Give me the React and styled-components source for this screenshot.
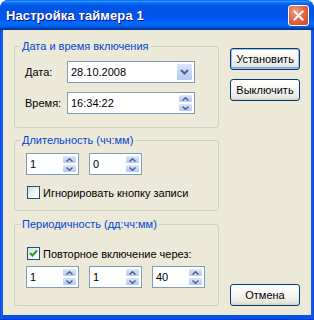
import React from 'react';
import styled, { createGlobalStyle } from 'styled-components';

const Global = createGlobalStyle`
  html, body { margin: 0; padding: 0; background: #ffffff; }
  body { width: 314px; height: 320px; overflow: hidden; }
  * { box-sizing: border-box; }
`;

const Window = styled.div`
  width: 314px;
  height: 320px;
  display: flex;
  flex-direction: column;
  background: linear-gradient(90deg, #0831d9 0, #166aee 1px, #0055e5 3px, #0055e5 calc(100% - 3px), #166aee calc(100% - 2px), #0831d9 100%);
  border-radius: 8px 8px 0 0;
  border-bottom: 1px solid #0831d9;
  font-family: "Liberation Sans", Arial, sans-serif;
  font-size: 11px;
  color: #000;
  overflow: hidden;
`;

const TitleBar = styled.div`
  height: 30px;
  flex: none;
  display: flex;
  align-items: center;
  justify-content: space-between;
  padding: 0 5px 0 6px;
  border-radius: 8px 8px 0 0;
  background: linear-gradient(180deg, #0058ee 0%, #3593ff 4%, #288eff 6%, #127dff 8%, #036ffc 10%, #0262ee 14%, #0057e5 20%, #0054e3 24%, #0055eb 56%, #005bf5 66%, #026afe 76%, #0062ef 86%, #0052d6 92%, #0040ab 94%, #003092 100%);
`;

const Title = styled.span`
  color: #fff;
  font-weight: bold;
  font-size: 13px;
  letter-spacing: 0.1px;
  text-shadow: 1px 1px #0f1089;
  margin-top: 1px;
`;

const CloseButton = styled.div`
  width: 21px;
  height: 21px;
  border: 1px solid #fff;
  border-radius: 3px;
  background: radial-gradient(circle at 35% 30%, #f19f86 0%, #e5694a 45%, #cc4421 100%);
  display: flex;
  align-items: center;
  justify-content: center;
`;

const Body = styled.div`
  flex: 1;
  margin: 0 3px 4px 3px;
  background: #ece9d8;
  display: flex;
  gap: 11px;
  padding: 10px 0 9px 11px;
`;

const LeftColumn = styled.div`
  width: 205px;
  display: flex;
  flex-direction: column;
  gap: 6px;
`;

const RightColumn = styled.div`
  display: flex;
  flex-direction: column;
  gap: 9px;
  padding-top: 8px;
`;

const Group = styled.fieldset`
  margin: ${p => p.$mt || 0}px 0 0 0;
  padding: 0;
  min-width: 0;
  height: ${p => p.$h}px;
  border: 1px solid #d0d0bf;
  border-radius: 3px;
`;

const Legend = styled.legend`
  margin-left: 5px;
  padding: 0 2px;
  color: #0046d5;
  line-height: 13px;
  font-size: 11px;
`;

const GroupContent = styled.div`
  padding: ${p => p.$pad};
  display: flex;
  flex-direction: column;
  gap: ${p => p.$gap || 0}px;
`;

const FieldGrid = styled.div`
  display: grid;
  grid-template-columns: 42px 128px;
  row-gap: 9px;
  align-items: center;
`;

const Label = styled.span`
  line-height: 13px;
`;

const Field = styled.div`
  width: ${p => p.$w}px;
  height: 22px;
  border: 1px solid #7f9db9;
  background: #fff;
  display: flex;
  align-items: stretch;
`;

const FieldText = styled.span`
  flex: 1;
  padding-left: 3px;
  display: flex;
  align-items: center;
`;

const SpinBox = styled.div`
  width: 15px;
  margin: 1px 1px 1px 0;
  display: flex;
  flex-direction: column;
`;

const SpinHalf = styled.div`
  flex: 1;
  border: 1px solid #ffffff;
  border-radius: 2px;
  background: linear-gradient(180deg, #dde6fb 0%, #c6d5f9 50%, #b6c8f3 100%);
  display: flex;
  align-items: center;
  justify-content: center;
`;

const DropButton = styled.div`
  width: 17px;
  margin: 1px 1px 1px 0;
  border: 1px solid #ffffff;
  border-radius: 2px;
  background: linear-gradient(180deg, #dde6fb 0%, #c6d5f9 50%, #b6c8f3 100%);
  display: flex;
  align-items: center;
  justify-content: center;
`;

const SpinRow = styled.div`
  display: flex;
  gap: 10px;
`;

const CheckRow = styled.label`
  display: flex;
  align-items: center;
  gap: 3px;
  margin-left: 1px;
  height: 13px;
`;

const CheckBox = styled.span`
  width: 13px;
  height: 13px;
  flex: none;
  border: 1px solid #1c5180;
  background: linear-gradient(135deg, #dcdcd7 0%, #f4f4f2 60%, #ffffff 100%);
  display: flex;
  align-items: center;
  justify-content: center;
`;

const Button = styled.div`
  width: 70px;
  height: 22px;
  border: 1px solid #003c74;
  border-radius: 3px;
  background: linear-gradient(180deg, #ffffff 0%, #f3f3ef 60%, #e6e4dc 88%, #d6d0c5 100%);
  box-shadow: ${p => (p.$default ? 'inset 0 0 0 1px #a6c0ec, inset 0 -1px 0 1px #7c9ee0' : 'none')};
  display: flex;
  align-items: center;
  justify-content: center;
`;

const BottomButton = styled(Button)`
  margin-top: auto;
`;

const UpArrow = () => (
  <svg width="7" height="4" viewBox="0 0 7 4">
    <path d="M0.5 3.5 L3.5 0.7 L6.5 3.5" fill="none" stroke="#4d6185" strokeWidth="1.4" />
  </svg>
);

const DownArrow = () => (
  <svg width="7" height="4" viewBox="0 0 7 4">
    <path d="M0.5 0.5 L3.5 3.3 L6.5 0.5" fill="none" stroke="#4d6185" strokeWidth="1.4" />
  </svg>
);

const DropArrow = () => (
  <svg width="9" height="6" viewBox="0 0 9 6">
    <path d="M1 1 L4.5 4.5 L8 1" fill="none" stroke="#4d6185" strokeWidth="2" />
  </svg>
);

const Spinner = ({ value, width = 53 }) => (
  <Field $w={width}>
    <FieldText>{value}</FieldText>
    <SpinBox>
      <SpinHalf><UpArrow /></SpinHalf>
      <SpinHalf><DownArrow /></SpinHalf>
    </SpinBox>
  </Field>
);

const Check = ({ checked, children }) => (
  <CheckRow>
    <CheckBox>
      {checked && (
        <svg width="9" height="9" viewBox="0 0 9 9">
          <path d="M1 4 L3.5 6.5 L8 1.5" fill="none" stroke="#21a121" strokeWidth="2" />
        </svg>
      )}
    </CheckBox>
    <span>{children}</span>
  </CheckRow>
);

export default function App() {
  return (
    <>
      <Global />
      <Window>
        <TitleBar>
          <Title>Настройка таймера 1</Title>
          <CloseButton>
            <svg width="11" height="11" viewBox="0 0 11 11">
              <path d="M1.5 1.5 L9.5 9.5 M9.5 1.5 L1.5 9.5" stroke="#fff" strokeWidth="2" strokeLinecap="square" />
            </svg>
          </CloseButton>
        </TitleBar>
        <Body>
          <LeftColumn>
            <Group $h={88}>
              <Legend>Дата и время включения</Legend>
              <GroupContent $pad="8px 0 0 10px">
                <FieldGrid>
                  <Label>Дата:</Label>
                  <Field $w={128}>
                    <FieldText>28.10.2008</FieldText>
                    <DropButton><DropArrow /></DropButton>
                  </Field>
                  <Label>Время:</Label>
                  <Spinner value="16:34:22" width={128} />
                </FieldGrid>
              </GroupContent>
            </Group>
            <Group $h={77}>
              <Legend>Длительность (чч:мм)</Legend>
              <GroupContent $pad="6px 0 0 11px" $gap={11}>
                <SpinRow>
                  <Spinner value="1" />
                  <Spinner value="0" />
                </SpinRow>
                <Check>Игнорировать кнопку записи</Check>
              </GroupContent>
            </Group>
            <Group $h={88} $mt={1}>
              <Legend>Периодичность (дд:чч:мм)</Legend>
              <GroupContent $pad="16px 0 0 11px" $gap={6}>
                <Check checked>Повторное включение через:</Check>
                <SpinRow>
                  <Spinner value="1" />
                  <Spinner value="1" />
                  <Spinner value="40" />
                </SpinRow>
              </GroupContent>
            </Group>
          </LeftColumn>
          <RightColumn>
            <Button $default>Установить</Button>
            <Button>Выключить</Button>
            <BottomButton>Отмена</BottomButton>
          </RightColumn>
        </Body>
      </Window>
    </>
  );
}
